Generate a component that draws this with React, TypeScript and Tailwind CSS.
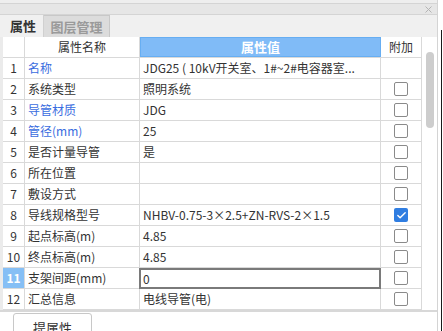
import { Check } from "lucide-react";

// property rows - name, value, blue label, checkbox state
const ROWS = [
  { no: 1, name: "名称", value: "JDG25 ( 10kV开关室、1#~2#电容器室...", blue: true, box: null },
  { no: 2, name: "系统类型", value: "照明系统", blue: false, box: false },
  { no: 3, name: "导管材质", value: "JDG", blue: true, box: false },
  { no: 4, name: "管径(mm)", value: "25", blue: true, box: false },
  { no: 5, name: "是否计量导管", value: "是", blue: false, box: false },
  { no: 6, name: "所在位置", value: "", blue: false, box: false },
  { no: 7, name: "敷设方式", value: "", blue: false, box: false },
  { no: 8, name: "导线规格型号", value: "NHBV-0.75-3×2.5+ZN-RVS-2×1.5", blue: false, box: true },
  { no: 9, name: "起点标高(m)", value: "4.85", blue: false, box: false },
  { no: 10, name: "终点标高(m)", value: "4.85", blue: false, box: false },
  { no: 11, name: "支架间距(mm)", value: "0", blue: false, box: false, active: true },
  { no: 12, name: "汇总信息", value: "电线导管(电)", blue: false, box: false },
];

const font = "font-['Microsoft_YaHei','Noto_Sans_CJK_SC',sans-serif]";

export default function App() {
  return (
    <div className={`w-[443px] h-[331px] bg-white overflow-hidden flex text-[12px] text-[#333] ${font}`}>
      {/* Panel */}
      <div className="w-[438px] h-full flex flex-col border-r border-[#d4d4d4]">
        {/* Title bar */}
        <div className="h-[4px] shrink-0 bg-[#eeeeee] border-b border-[#d4d4d4]" />
        <div className="h-[11px] shrink-0 bg-[#e6e6e6] border-b border-[#d4d4d4] flex items-center justify-end pr-[5px]">
          <svg width="7" height="7" viewBox="0 0 7 7" className="text-[#b4b4b4]">
            <path d="M0.5 0.5 L6.5 6.5 M6.5 0.5 L0.5 6.5" stroke="currentColor" strokeWidth="1" />
          </svg>
        </div>

        {/* Tabs */}
        <div className="h-[22px] shrink-0 bg-[#f0f0f0] flex pl-[3px] text-[13px] font-bold">
          <div className="w-[41px] flex items-center justify-center text-[#333] border-r border-[#d0d0d0]">属性</div>
          <div className="w-[66px] flex items-center justify-center text-[#9a9a9a] bg-[#dcdcdc] border-r border-t border-[#c8c8c8]">
            图层管理
          </div>
        </div>

        {/* Grid + scrollbar */}
        <div className="flex shrink-0 pl-[3px] bg-[#ebebeb]">
          <div className="flex flex-col bg-white">
            <div className="h-[21px] flex border-b border-[#d9d9d9]">
              <div className="w-[22px] border-r border-[#d9d9d9]" />
              <div className="w-[115px] border-r border-[#d9d9d9] flex items-center justify-center">属性名称</div>
              <div className="w-[241px] bg-[#80bbf7] border border-[#67aef2] flex items-center justify-center text-white font-bold text-[13px]">
                属性值
              </div>
              <div className="w-[41px] border-r border-[#d9d9d9] flex items-center justify-center">附加</div>
            </div>
            {ROWS.map((r) => (
              <Row key={r.no} row={r} />
            ))}
          </div>
          {/* Scrollbar */}
          <div className="w-[15px] bg-white pt-[15px] flex justify-center">
            <div className="w-[8px] h-[76px] rounded-full bg-[#cdcdcd]" />
          </div>
        </div>

        <div className="h-[2px] shrink-0 bg-[#d8d8d8]" />

        {/* Footer */}
        <div className="flex-1 min-h-0 bg-white pl-[13px] pt-[1px]">
          <div className="w-[79px] h-[30px] border border-[#c8c8c8] rounded-[3px] flex justify-center pt-[4px] text-[13px]">
            提属性
          </div>
        </div>
      </div>

      <div className="w-[3px]" />
      <div className="w-[1px] mt-[30px] bg-[#1a1a1a]" />
    </div>
  );
}

interface RowProps {
  row: (typeof ROWS)[number] & { active?: boolean };
}

function Row({ row }: RowProps) {
  return (
    <div className="h-[21px] flex border-b border-[#d9d9d9]">
      <div
        className={`w-[22px] border-r border-[#d9d9d9] flex items-center justify-center ${
          row.active ? "bg-[#86bff5] text-white font-bold" : "text-[#333]"
        }`}
      >
        {row.no}
      </div>
      <div
        className={`w-[115px] border-r border-[#d9d9d9] flex items-center pl-[3px] ${
          row.blue ? "text-[#3a6de0]" : "text-[#333]"
        }`}
      >
        {row.name}
      </div>
      <div
        className={`w-[241px] flex items-center whitespace-nowrap overflow-hidden ${
          row.active ? "border-2 border-[#7a7a7a] pl-[2px] w-[242px] -ml-[1px] h-[21px]" : "border-r border-[#d9d9d9] pl-[3px]"
        }`}
      >
        {row.value}
      </div>
      <div className="w-[41px] border-r border-[#d9d9d9] flex items-center justify-center">
        {row.box === null ? null : row.box ? (
          <span className="w-[14px] h-[14px] rounded-[2px] bg-[#2f7de1] flex items-center justify-center">
            <Check className="w-[11px] h-[11px] text-white" strokeWidth={3} />
          </span>
        ) : (
          <span className="w-[14px] h-[14px] rounded-[2px] border border-[#8a8a8a] bg-white" />
        )}
      </div>
    </div>
  );
}
